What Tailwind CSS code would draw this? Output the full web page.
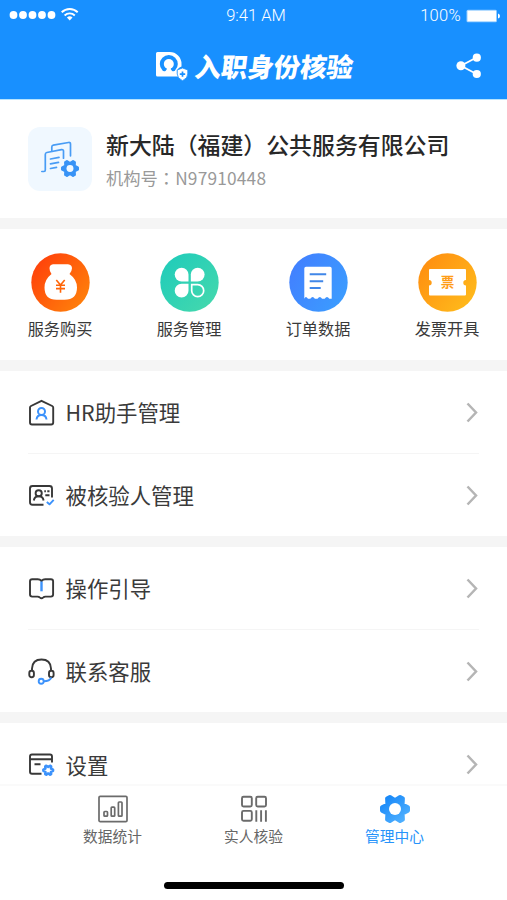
<!DOCTYPE html>
<html lang="zh-CN">
<head>
<meta charset="utf-8">
<title>管理中心</title>
<script src="https://cdn.jsdelivr.net/npm/@tailwindcss/browser@4"></script>
</head>
<body class="bg-white font-['Noto_Sans_CJK_SC',sans-serif] text-[#3a3a3a]">
<svg class="hidden">
  <defs>
    <path id="gear" stroke-linejoin="round" d="M13-1.600V1.600L7.600 4.400 7.900 10.500 5.100 12.100 0 8.800-5.100 12.100-7.900 10.500-7.600 4.400-13 1.600V-1.600L-7.600-4.400-7.900-10.500-5.100-12.100 0-8.800 5.100-12.100 7.900-10.500 7.600-4.400Z"/>
    <path id="chev" d="M1.5 1.5 10 10.5 1.5 19.5" fill="none" stroke="#b5b5b5" stroke-width="2.500"/>
  </defs>
</svg>
<div class="flex h-[900px] w-[507px] flex-col overflow-hidden">
  <header class="h-[100px] shrink-0 border-b border-[#b5e4ff] bg-[#1890ff] text-white">
    <div class="grid h-8 grid-cols-3 items-center pr-[7px] pl-[9px]">
      <svg class="h-8 w-[72px]" viewBox="0 0 72 32" fill="#fff">
        <circle cx="4.5" cy="15" r="3.9"/><circle cx="14" cy="15" r="3.9"/><circle cx="23.5" cy="15" r="3.9"/><circle cx="33" cy="15" r="3.9"/><circle cx="42.500" cy="15" r="3.9"/>
        <g fill="none" stroke="#fff" stroke-width="1.9"><path d="M52.700 12.300a11.500 11.500 0 0 1 16 0"/><path d="M55.600 15.500a7.300 7.300 0 0 1 10.200 0"/></g>
        <path d="M57.900 17.600a4 4 0 0 1 5.600 0L60.700 20.500Z"/>
      </svg>
      <span class="pl-[3px] text-center font-[Roboto,sans-serif] text-[16.500px] font-light whitespace-nowrap">9:41 AM</span>
      <div class="flex items-center justify-end gap-[5px]">
        <span class="font-[Roboto,sans-serif] text-[16.500px] font-light tracking-[.3px]">100%</span>
        <svg class="h-[14px] w-[34px]" viewBox="0 0 34 14" fill="#fff"><rect x=".5" y=".8" width="30.500" height="12.400" rx="1.500" fill-opacity=".55"/><rect x="1.500" y="1.700" width="28.500" height="10.600"/><path d="M32 4.500q2 .5 2 2.500t-2 2.500Z"/></svg>
      </div>
    </div>
    <div class="flex h-[67px] items-center pr-[25px] pl-[155px]">
      <svg class="h-[30px] w-[33px]" viewBox="0 0 33 30">
        <path d="M2.500 1H14.500A11.800 11.800 0 0 1 26.500 13V15.500Q22 17 22 21.500L23.500 25.500H2.500Q1 25.500 1 24V2.500Q1 1 2.500 1Z" fill="#fff"/>
        <circle cx="13.800" cy="13" r="9" fill="#1890ff"/>
        <circle cx="13.800" cy="13" r="5" fill="#fff"/>
        <path d="M11.800 16h4v2.300q.6 2 4 2.700v3H7.800V21q3.400-.7 4-2.700Z" fill="#fff"/>
        <path d="m27.500 17 5.300 1.900v4.100q0 4.200-5.300 6.700-5.300-2.500-5.300-6.700v-4.100Z" fill="#fff" stroke="#1890ff" stroke-width=".8"/>
        <path d="M27.500 20.400v5.400M24.800 23.100h5.400" stroke="#1890ff" stroke-width="1.700"/>
      </svg>
      <h1 class="ml-[6.500px] -skew-x-[7deg] text-[26.400px] leading-[34px] font-black whitespace-nowrap">入职身份核验</h1>
      <svg class="ml-auto h-[26px] w-[26px]" viewBox="0 0 26 26" fill="#fff"><path d="M20.500 4.500 5 12.800 20.500 21" fill="none" stroke="#fff" stroke-width="1.800"/><circle cx="4.900" cy="12.800" r="4.500"/><circle cx="20.800" cy="4.700" r="4.100"/><circle cx="20.800" cy="21" r="4.100"/></svg>
    </div>
  </header>

  <main class="flex h-[684px] shrink-0 flex-col gap-[11px] overflow-hidden bg-[#f5f5f5]">
    <section class="flex h-[118px] shrink-0 items-center gap-[14px] bg-white pl-7">
      <div class="flex h-16 w-16 items-center justify-center rounded-[12px] bg-[#f0f8ff]">
        <svg class="h-[38px] w-[38px]" viewBox="0 0 38 38" fill="none" stroke="#489cf5" stroke-width="1.700" stroke-linecap="round" stroke-linejoin="round">
          <path d="M.8 31.500H3q1.300 0 1.300-1.500V14.500q0-1.700 1.500-2L20.500 9.600q2-.3 2 1.500v7.100"/>
          <path d="M10.800 10.800V7q0-1.600 1.500-1.900L27.500 2.500q2-.3 2 1.600v11.700"/>
          <path d="m9.500 19 8.500-1.600M9.500 23.900l8-1.600M9.500 28.500l6-1.200"/>
          <g transform="translate(29 28.500) scale(.6)"><use href="#gear" fill="#3893f6" stroke="#3893f6" stroke-width="4"/><circle r="5.800" fill="#f0f8ff" stroke="none"/></g>
        </svg>
      </div>
      <div class="pb-[2px]">
        <h2 class="text-[22.900px] leading-[34px] font-medium whitespace-nowrap text-[#282828]">新大陆（福建）公共服务有限公司</h2>
        <p class="mt-[5px] text-[17.300px] leading-[24px] whitespace-nowrap text-[#999]">机构号<span lang="zh-TW" class="font-['Noto_Sans_CJK_TC',sans-serif]">：</span><span class="tracking-[.2px]">N97910448</span></p>
      </div>
    </section>

    <section class="flex h-[131px] shrink-0 justify-between bg-white px-[27px] pt-[24px] text-[16.200px] leading-[24px]">
      <div class="flex w-[66px] flex-col items-center gap-[4px] whitespace-nowrap">
        <svg class="h-[59px] w-[59px] shrink-0" viewBox="0 0 59 59">
          <linearGradient id="g1" x1="0" y1=".1" x2="1" y2=".9"><stop stop-color="#ff3d0b"/><stop offset="1" stop-color="#ff850b"/></linearGradient><circle cx="29.500" cy="29.500" r="29.200" fill="url(#g1)"/>
          <path d="M22 11.300h15q4 .5 4 4-.2 3.500-2.500 5.700Q46 26.500 46 34.500 46 46.700 33.500 46.700h-8Q13.500 46.700 13.500 34.500q0-8 7-13.500-2-2.300-2-5.700 0-3.500 3.500-4Z" fill="#fff"/>
          <path d="m25.300 27 4.200 5 4.200-5M29.500 32v7.800M25 32.300h9M25 35.600h9" fill="none" stroke="#ff6508" stroke-width="1.600"/>
        </svg><span>服务购买</span>
      </div>
      <div class="flex w-[66px] flex-col items-center gap-[4px] whitespace-nowrap">
        <svg class="h-[59px] w-[59px] shrink-0" viewBox="0 0 59 59">
          <linearGradient id="g2" x1="0" y1="0" x2="1" y2="1"><stop stop-color="#1dcbbb"/><stop offset="1" stop-color="#47d9ac"/></linearGradient><circle cx="29.500" cy="29.500" r="29.200" fill="url(#g2)"/>
          <g fill="#fff"><path d="M28.500 28.500V21.600a6.900 6.900 0 1 0-6.900 6.900Z"/><path d="M30.800 28.500V21.600a6.900 6.900 0 1 1 6.900 6.900Z"/><path d="M28.500 30.800V37.700a6.900 6.900 0 1 1-6.900-6.900Z"/></g>
          <path d="M31.700 31.700h6a6 6 0 1 1-6 6Z" fill="none" stroke="#fff" stroke-width="1.700"/>
        </svg><span>服务管理</span>
      </div>
      <div class="flex w-[66px] flex-col items-center gap-[4px] whitespace-nowrap">
        <svg class="h-[59px] w-[59px] shrink-0" viewBox="0 0 59 59">
          <linearGradient id="g3" x1="0" y1=".2" x2="1" y2=".8"><stop stop-color="#427fff"/><stop offset="1" stop-color="#3b9dff"/></linearGradient><circle cx="29.500" cy="29.500" r="29.200" fill="url(#g3)"/>
          <path d="M17 13.700h24q1.700 0 1.700 1.700V45.800h-2.400q-2.300-3.700-4.600 0h-2.600q-2.300-3.700-4.600 0h-2.600q-2.300-3.700-4.600 0h-2.300q-2.300-3.500-3.700 0V15.400q0-1.700 1.700-1.700Z" fill="#fff"/>
          <path d="M20.700 21.300h16.500M20.700 28.200h13.500M20.700 35h11" stroke="#4187e8" stroke-width="2"/>
        </svg><span>订单数据</span>
      </div>
      <div class="flex w-[66px] flex-col items-center gap-[4px] whitespace-nowrap">
        <svg class="h-[59px] w-[59px] shrink-0" viewBox="0 0 59 59">
          <linearGradient id="g4" x1="0" y1=".1" x2="1" y2=".9"><stop stop-color="#ff8c10"/><stop offset="1" stop-color="#ffbd1c"/></linearGradient><circle cx="29.500" cy="29.500" r="29.200" fill="url(#g4)"/>
          <path d="M12 16h35q1 0 1 1v10a2.700 2.700 0 0 0 0 5.400V41.500q0 1-1 1H12q-1 0-1-1V32.400a2.700 2.700 0 0 0 0-5.400V17q0-1 1-1Z" fill="#fff"/>
          <text x="29.500" y="34" text-anchor="middle" font-size="13.500" font-weight="700" fill="#ff9d17">票</text>
        </svg><span>发票开具</span>
      </div>
    </section>

    <section class="h-[165px] shrink-0 bg-white px-7 text-[21.400px] leading-[30px]">
      <div class="flex h-[83px] items-center border-b border-[#f5f5f5]">
        <svg class="h-[27px] w-[27px]" viewBox="0 0 27 27" fill="none" stroke="#383838" stroke-width="1.900" stroke-linejoin="round"><path d="M2 8.500q0-1 1-1.500L13.500 1.800 24.200 7q1 .5 1 1.500V23.500q0 2-2 2H4q-2 0-2-2Z"/><g stroke="#3c92fb" stroke-width="2"><circle cx="13.500" cy="12.400" r="3.500"/><path d="M8.500 20.500q.5-4.600 5-4.600t5 4.600"/></g></svg>
        <span class="ml-[10.500px]">HR助手管理</span>
        <svg class="ml-auto h-[21px] w-[13px]" viewBox="0 0 13 21"><use href="#chev"/></svg>
      </div>
      <div class="flex h-[82px] items-center">
        <svg class="h-[27px] w-[27px]" viewBox="0 0 27 27" fill="none" stroke="#383838" stroke-width="1.900" stroke-linejoin="round"><path d="M15.500 22.800H4.500Q2 22.800 2 20.300V6.500Q2 4 4.500 4H21.500Q24 4 24 6.500V15.500"/><circle cx="10.700" cy="11.300" r="3.100"/><path d="M5.800 18.500q.7-4.200 4.900-4.200t4.900 4.200M16.300 9.300h1.600M19.300 9.300h2.200M17.300 13.200h4.200"/><path d="m18.800 20 2.700 2.300 4.200-4.500" stroke="#3c92fb"/></svg>
        <span class="ml-[10.500px]">被核验人管理</span>
        <svg class="ml-auto h-[21px] w-[13px]" viewBox="0 0 13 21"><use href="#chev"/></svg>
      </div>
    </section>

    <section class="h-[165px] shrink-0 bg-white px-7 text-[21.400px] leading-[30px]">
      <div class="flex h-[83px] items-center border-b border-[#f5f5f5]">
        <svg class="h-[27px] w-[27px]" viewBox="0 0 27 27" fill="none" stroke="#383838" stroke-width="1.900" stroke-linejoin="round"><path d="M13.500 6Q12 4.300 9.800 4.300H4.200Q2 4.300 2 6.300V19.500Q2 21.600 4.200 21.600H9.500Q11 21.600 11.700 22.400 13.500 24.200 15.300 22.400 16 21.600 17.500 21.600H22.900Q25.100 21.600 25.100 19.500V6.300Q25.100 4.300 22.900 4.300H17.200Q15 4.300 13.500 6Z"/><path d="M13.500 6.500v9.800" stroke="#3c92fb" stroke-width="2.400"/></svg>
        <span class="ml-[10.500px]">操作引导</span>
        <svg class="ml-auto h-[21px] w-[13px]" viewBox="0 0 13 21"><use href="#chev"/></svg>
      </div>
      <div class="flex h-[82px] items-center">
        <svg class="h-[27px] w-[27px]" viewBox="0 0 27 27" fill="none" stroke="#383838" stroke-width="1.900"><path d="M4 12.500V10.500Q4.500 1.500 13.500 1.500T23 10.500V12.500"/><rect x="1.300" y="12.700" width="4.600" height="6.500" rx="2.200"/><rect x="21" y="12.700" width="4.600" height="6.500" rx="2.200"/><g stroke="#3c92fb"><circle cx="13.200" cy="23.200" r="2.500"/><path d="M15.900 23.300q5.700-.1 7.500-3.800"/></g></svg>
        <span class="ml-[10.500px]">联系客服</span>
        <svg class="ml-auto h-[21px] w-[13px]" viewBox="0 0 13 21"><use href="#chev"/></svg>
      </div>
    </section>

    <section class="h-[83px] shrink-0 bg-white px-7 text-[21.400px] leading-[30px]">
      <div class="flex h-[83px] items-center">
        <svg class="h-[27px] w-[27px]" viewBox="0 0 27 27" fill="none" stroke="#383838" stroke-width="1.900"><path d="M13.500 22.700H4Q2 22.700 2 20.700V5.500Q2 3.500 4 3.500H22Q24 3.500 24 5.500V11.500M2 8.300H24M6.500 13.300h6"/><g transform="translate(20.200 19.200) scale(.37)"><use href="#gear" stroke="#3c92fb" stroke-width="7"/></g></svg>
        <span class="ml-[10.500px]">设置</span>
        <svg class="ml-auto h-[21px] w-[13px]" viewBox="0 0 13 21"><use href="#chev"/></svg>
      </div>
    </section>
  </main>

  <nav class="flex h-[116px] shrink-0 flex-col items-center border-t-2 border-[#fafafa] bg-white text-[14.700px] leading-[22px] text-[#666]">
    <div class="flex h-[96px] w-[423px] pt-[7px]">
      <div class="flex flex-1 flex-col items-center">
        <svg class="h-8 w-8" viewBox="0 0 32 32" fill="none" stroke="#6b6b6b" stroke-width="1.700"><rect x="2" y="3.300" width="28" height="25.300" rx="1.200"/><rect x="7" y="18.500" width="3.500" height="4.700" rx=".8"/><rect x="14.200" y="14.200" width="3.500" height="9" rx=".8"/><rect x="21.400" y="9" width="3.600" height="14.200" rx=".8"/></svg>
        <span>数据统计</span>
      </div>
      <div class="flex flex-1 flex-col items-center">
        <svg class="h-8 w-8" viewBox="0 0 32 32" fill="none" stroke="#6b6b6b" stroke-width="1.900"><rect x="4" y="3.700" width="9.800" height="9.800" rx="1.500"/><rect x="18.200" y="3.700" width="9.800" height="9.800" rx="1.500"/><rect x="4" y="17.900" width="9.800" height="9.800" rx="1.500"/><path d="M18.300 17.300v11.400M23.100 17.300v11.400M27.900 17.300v11.400"/></svg>
        <span>实人核验</span>
      </div>
      <div class="flex flex-1 flex-col items-center text-[#2793fa]">
        <svg class="h-8 w-8" viewBox="-16 -16 32 32"><linearGradient id="blue" gradientUnits="userSpaceOnUse" x1="-10" y1="-12" x2="10" y2="12"><stop offset="0" stop-color="#1687f8"/><stop offset="1" stop-color="#51b1ff"/></linearGradient><use href="#gear" fill="url(#blue)" stroke="url(#blue)" stroke-width="4"/><circle r="6" fill="#fff"/></svg>
        <span>管理中心</span>
      </div>
    </div>
    <div class="h-[7px] w-[180px] rounded-full bg-black"></div>
  </nav>
</div>
</body>
</html>
